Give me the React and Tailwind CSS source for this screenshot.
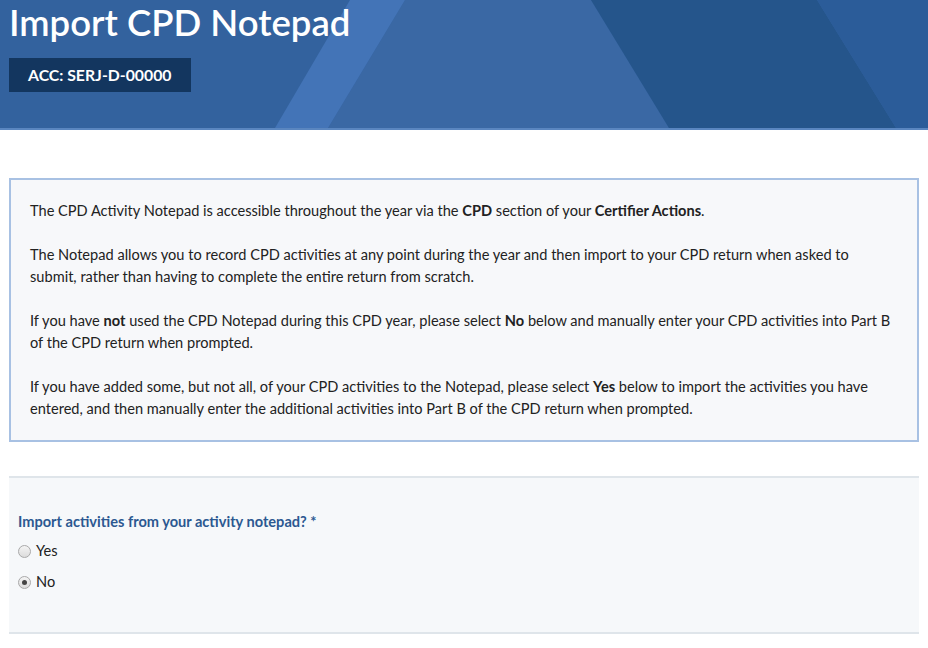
import { useState } from "react";

const Header = () => (
  <div className="relative h-[130px] overflow-hidden bg-[#33629e] border-b-2 border-[#5a86c0]">
    {/* background facets */}
    <svg className="absolute inset-0" width="928" height="128" viewBox="0 0 928 128" preserveAspectRatio="none">
      <polygon points="405,0 591,0 669,128 328,128" fill="#3a68a4" />
      <polygon points="350,0 405,0 328,128 275,128" fill="#4374b7" />
      <polygon points="591,0 817,0 896,128 669,128" fill="#25558b" />
      <polygon points="817,0 928,0 928,128 896,128" fill="#2b5c99" />
    </svg>
    <div className="relative px-[9px]">
      <h1 className="text-[36.5px] leading-[44px] font-semibold text-white">Import CPD Notepad</h1>
      <div className="mt-[14px] inline-block bg-[#13365f] px-[19px] py-[6px] text-[15.8px] leading-[22px] font-bold text-white">
        ACC: SERJ-D-00000
      </div>
    </div>
  </div>
);

const InfoBox = () => (
  <div className="mx-[9px] border-2 border-[#a8c1e3] bg-[#f7f8fa] px-[19px] py-[20px] text-[14.6px] leading-[22px] text-[#222]">
    <p>
      The CPD Activity Notepad is accessible throughout the year via the <b>CPD</b> section of your{" "}
      <b>Certifier Actions</b>.
    </p>
    <p className="mt-[22px]">
      The Notepad allows you to record CPD activities at any point during the year and then import to your CPD return when asked to
      submit, rather than having to complete the entire return from scratch.
    </p>
    <p className="mt-[22px]">
      If you have <b>not</b> used the CPD Notepad during this CPD year, please select <b>No</b> below and manually enter your CPD
      activities into Part B of the CPD return when prompted.
    </p>
    <p className="mt-[22px]">
      If you have added some, but not all, of your CPD activities to the Notepad, please select <b>Yes</b> below to import the
      activities you have entered, and then manually enter the additional activities into Part B of the CPD return when prompted.
    </p>
  </div>
);

const Radio = ({ label, checked, onChange }) => (
  <label className="flex items-center gap-[5px] h-[31px] cursor-pointer">
    <span className="w-[13px] h-[13px] rounded-full border border-[#a9a9a9] bg-gradient-to-b from-[#f4f4f4] to-[#dcdcdc] flex items-center justify-center">
      {checked && <span className="w-[5px] h-[5px] rounded-full bg-[#444]" />}
    </span>
    <input type="radio" className="hidden" checked={checked} onChange={onChange} />
    <span className="text-[14.6px] text-[#222]">{label}</span>
  </label>
);

export default function App() {
  const [value, setValue] = useState("no");

  return (
    <div className="min-h-[648px] bg-white" style={{ fontFamily: "Lato, 'Noto Sans', sans-serif" }}>
      <Header />
      <div className="pt-[48px]">
        <InfoBox />
      </div>
      <div className="mx-[9px] mt-[34px] border-y-2 border-[#dfe5ea] bg-[#f6f8fa] px-[9px] pt-[33px] pb-[34px]">
        <div className="text-[14.6px] font-bold text-[#2c5891] mb-[3px]">
          Import activities from your activity notepad? *
        </div>
        <Radio label="Yes" checked={value === "yes"} onChange={() => setValue("yes")} />
        <Radio label="No" checked={value === "no"} onChange={() => setValue("no")} />
      </div>
    </div>
  );
}
